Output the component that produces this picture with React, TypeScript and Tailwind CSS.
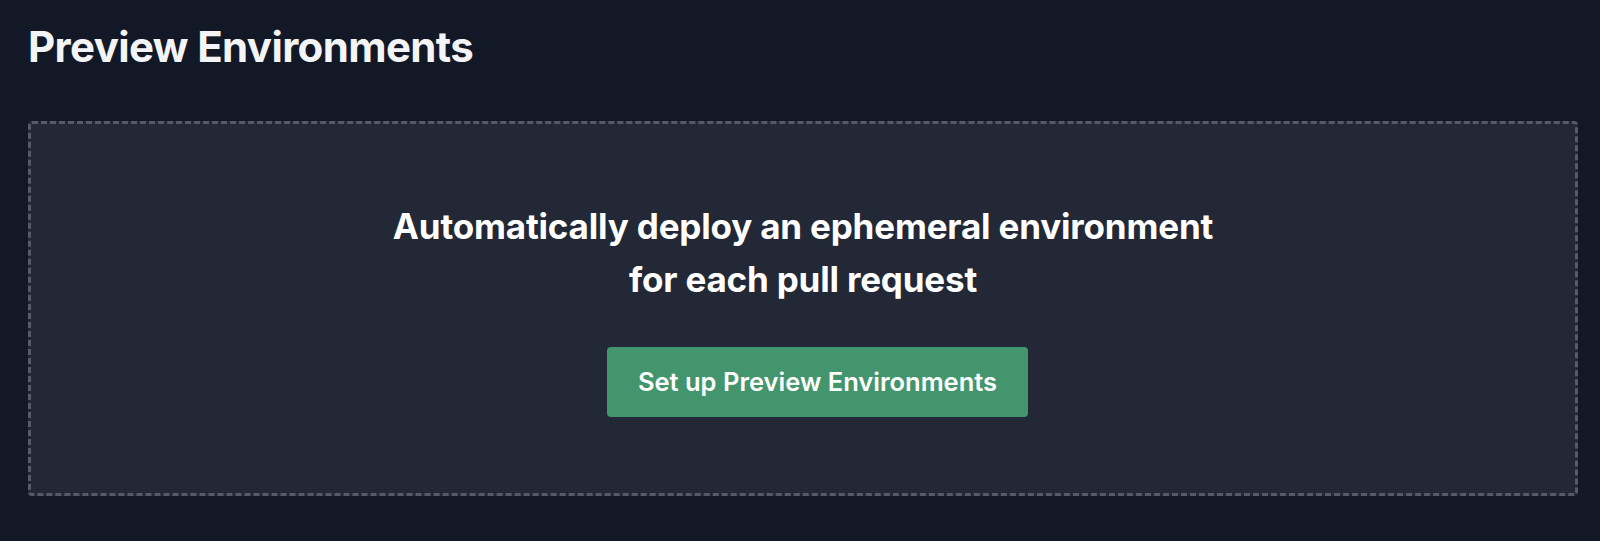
export default function App() {
  return (
    <div
      className="min-h-[541px] w-full bg-[#131826] pl-[28px] pr-[22px] pt-[22px] text-[#f3f4f6]"
      style={{ fontFamily: "Inter, 'Noto Sans', sans-serif" }}
    >
      <h1 className="text-[42px] font-bold leading-[1.2] tracking-[-0.015em]">Preview Environments</h1>

      <div className="mt-[49px] flex h-[375px] flex-col items-center justify-center gap-[42px] rounded-[4px] border-[3px] border-dashed border-[#555a66] bg-[#222836]">
        <p className="text-center text-[35px] font-bold leading-[1.5] tracking-[-0.005em] text-white">
          Automatically deploy an ephemeral environment
          <br />
          for each pull request
        </p>
        <button className="ml-[29px] h-[70px] w-[421px] rounded-[4px] bg-[#43956d] text-[25.5px] font-semibold text-white">
          Set up Preview Environments
        </button>
      </div>
    </div>
  )
}
